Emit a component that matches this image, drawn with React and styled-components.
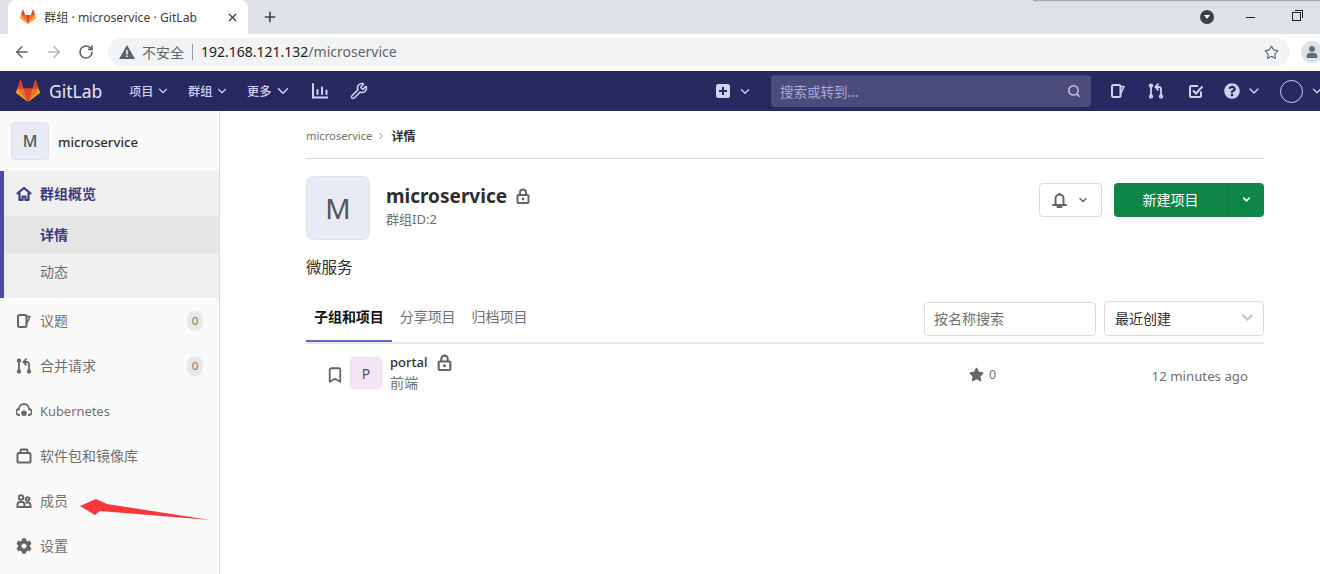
import React from 'react';
import styled, { createGlobalStyle } from 'styled-components';
import { ArrowLeft, ArrowRight, RotateCw, Star, X, Plus, ChevronDown, Search, Wrench, Bookmark } from 'lucide-react';
import { FaQuestionCircle, FaStar, FaCog, FaUser } from 'react-icons/fa';

const GlobalStyle = createGlobalStyle`
  html, body {
    margin: 0;
    padding: 0;
    height: 574px;
    overflow: hidden;
    background: #fff;
    font-family: "Noto Sans", "Noto Sans CJK SC", sans-serif;
    color: #2e2e2e;
  }
  * { box-sizing: border-box; }
`;

const Page = styled.div`
  position: relative;
  width: 1320px;
  height: 574px;
  overflow: hidden;
  display: flex;
  flex-direction: column;
`;

/* browser chrome */
const TabStrip = styled.div`
  height: 34px;
  background: #dee1e6;
  display: flex;
  align-items: center;
  padding-left: 8px;
  flex-shrink: 0;
`;

const Tab = styled.div`
  width: 240px;
  height: 34px;
  background: #fff;
  border-radius: 8px 8px 0 0;
  display: flex;
  align-items: center;
  padding: 0 9px 0 12px;
  font-size: 12.2px;
  color: #3c4043;
`;

const TabTitle = styled.span`
  margin-left: 8px;
  flex: 1;
  white-space: nowrap;
`;

const NewTab = styled.div`
  margin-left: 14px;
  display: flex;
  color: #3c4043;
`;

const WindowControls = styled.div`
  margin-left: auto;
  display: flex;
  align-items: center;
  padding-right: 19px;
`;

const ProfileDot = styled.div`
  width: 14px;
  height: 14px;
  border-radius: 50%;
  background: #3c4043;
  display: flex;
  align-items: center;
  justify-content: center;
  margin-right: 32px;
  &::after {
    content: '';
    border-left: 3px solid transparent;
    border-right: 3px solid transparent;
    border-top: 4px solid #fff;
  }
`;

const MinBar = styled.div`
  width: 9px;
  height: 1px;
  background: #222;
  margin-right: 37px;
`;

const RestoreBox = styled.div`
  position: relative;
  width: 9px;
  height: 9px;
  border: 1px solid #222;
  margin-top: -1px;
  &::after {
    content: '';
    position: absolute;
    top: -3px;
    right: -3px;
    width: 7px;
    height: 7px;
    border-top: 1px solid #222;
    border-right: 1px solid #222;
  }
`;

const TopShadow = styled.div`
  position: absolute;
  top: 0;
  left: 1033px;
  right: 0;
  height: 2px;
  background: linear-gradient(#9a9da1, #dee1e6);
`;

const Toolbar = styled.div`
  height: 37px;
  display: flex;
  align-items: flex-start;
  padding-top: 4px;
  flex-shrink: 0;
  background: #fff;
`;

const ToolButton = styled.div`
  width: 32px;
  height: 28px;
  display: flex;
  align-items: center;
  justify-content: center;
  flex-shrink: 0;
  color: ${p => p.$dim ? '#b4b6b9' : '#5f6368'};
  margin-left: ${p => p.$first ? 6 : 0}px;
`;

const Omnibox = styled.div`
  margin-left: 6px;
  width: 1182px;
  flex-shrink: 0;
  height: 28px;
  border-radius: 14px;
  background: #f1f3f4;
  display: flex;
  align-items: center;
  padding: 0 11px;
  font-size: 14px;
`;

const NotSecure = styled.span`
  margin-left: 7px;
  color: #5f6368;
  font-size: 14px;
  padding-bottom: 1px;
`;

const Sep = styled.span`
  width: 1px;
  height: 16px;
  background: #9aa0a6;
  margin: 0 8px;
`;

const Host = styled.span`
  color: #202124;
  font-size: 14px;
  padding-bottom: 2px;
`;

const UrlPath = styled.span`
  color: #5f6368;
  font-size: 14px;
  padding-bottom: 2px;
`;

const Bookmarked = styled.div`
  margin-left: auto;
  display: flex;
  color: #5f6368;
`;

const ProfileButton = styled.div`
  width: 22px;
  height: 22px;
  border-radius: 50%;
  background: #dee1e6;
  margin: 3px 0 0 11px;
  flex-shrink: 0;
  display: flex;
  align-items: center;
  justify-content: center;
  color: #5f6a7a;
`;

/* gitlab navbar */
const Navbar = styled.header`
  height: 40px;
  flex-shrink: 0;
  background: #292961;
  display: flex;
  align-items: center;
  padding-left: 16px;
  color: #d1d1f0;
`;

const BrandText = styled.span`
  margin-left: 9px;
  font-size: 17.5px;
  color: #e4e4f6;
  width: 80px;
`;

const NavMenu = styled.div`
  display: flex;
  align-items: center;
  width: ${p => p.$w}px;
  font-size: 12.2px;
  font-weight: 500;
  color: #d1d1f0;
  gap: 3px;
`;

const NavIcon = styled.div`
  display: flex;
  align-items: center;
  width: ${p => p.$w}px;
  color: #d1d1f0;
`;

const NavSpacer = styled.div`
  flex: 1;
`;

const SearchBox = styled.div`
  width: 320px;
  height: 32px;
  border-radius: 4px;
  background: #4b4b7c;
  display: flex;
  align-items: center;
  justify-content: space-between;
  padding: 0 10px 0 9px;
  font-size: 13.5px;
  color: #a9a9d6;
  margin: 0 19px 0 19px;
`;

const NavAvatar = styled.div`
  width: 23px;
  height: 23px;
  border-radius: 50%;
  border: 1px solid #d1d1f0;
  flex-shrink: 0;
  margin-right: 7px;
`;

const NavCaret = styled.div`
  display: flex;
  flex-shrink: 0;
  margin-right: -4px;
`;

/* layout */
const Body = styled.div`
  flex: 1;
  display: flex;
  min-height: 0;
`;

const Sidebar = styled.aside`
  width: 220px;
  flex-shrink: 0;
  background: #fafafa;
  border-right: 1px solid #dbdbdb;
`;

const ContextHeader = styled.div`
  height: 60px;
  display: flex;
  align-items: center;
  padding-left: 11px;
  font-size: 13.2px;
  font-weight: 500;
  color: #2e2e2e;
`;

const Avatar = styled.div`
  width: ${p => p.$size}px;
  height: ${p => p.$size}px;
  flex-shrink: 0;
  border-radius: ${p => p.$radius || 4}px;
  border: 1px solid rgba(0,0,0,0.03);
  background: ${p => p.$bg || '#e8eaf6'};
  color: #555;
  display: flex;
  align-items: center;
  justify-content: center;
  font-size: ${p => p.$font}px;
`;

const ContextName = styled.span`
  margin-left: 9px;
  padding-top: 2px;
`;

const ActiveGroup = styled.div`
  background: #f0f0f0;
  border-left: 4px solid #4b4ba3;
  height: 127px;
`;

const ActiveTitle = styled.div`
  height: 45px;
  display: flex;
  align-items: center;
  padding-left: 12px;
  gap: 8px;
  font-size: 14px;
  font-weight: 700;
  color: #3a3a80;
`;

const ActiveLabel = styled.span`
  padding-bottom: 2px;
`;

const SubItem = styled.div`
  height: 37px;
  padding: 0 0 2px 36px;
  display: flex;
  align-items: center;
  font-size: 14px;
  font-weight: ${p => p.$active ? 700 : 400};
  color: ${p => p.$active ? '#3a3a80' : '#707070'};
  background: ${p => p.$active ? '#e5e5e5' : 'transparent'};
`;

const NavItem = styled.div`
  height: 45px;
  display: flex;
  align-items: center;
  padding: 0 16px 0 16px;
  gap: 8px;
  font-size: 14px;
  color: #707070;
`;

const ItemIcon = styled.div`
  width: 16px;
  display: flex;
  justify-content: center;
  color: #666;
  flex-shrink: 0;
`;

const ItemLabel = styled.span`
  flex: 1;
  font-size: ${p => p.$latin ? 12.9 : 14}px;
  padding-top: ${p => p.$latin ? 1 : 0}px;
  padding-bottom: ${p => p.$latin ? 0 : 2}px;
`;

const Count = styled.span`
  width: 16px;
  height: 20px;
  border-radius: 8px;
  background: #e8e8e8;
  color: #777;
  font-size: 11.5px;
  display: flex;
  align-items: center;
  justify-content: center;
`;

const Main = styled.main`
  flex: 1;
  padding: 0 56px 0 86px;
`;

const Breadcrumbs = styled.div`
  height: 48px;
  padding-top: 2px;
  display: flex;
  align-items: center;
  border-bottom: 1px solid #dbdbdb;
  font-size: 11.2px;
  color: #707070;
`;

const CrumbSep = styled.span`
  display: flex;
  margin: 0 6px 0 5px;
  color: #909090;
`;

const CrumbCurrent = styled.span`
  font-size: 12px;
  font-weight: 700;
  color: #2e2e2e;
`;

const GroupHeader = styled.div`
  display: flex;
  align-items: flex-start;
  margin-top: 17px;
`;

const GroupInfo = styled.div`
  margin-left: 16px;
  padding-top: 5px;
`;

const GroupName = styled.div`
  display: flex;
  align-items: center;
  font-size: 19px;
  font-weight: 700;
  line-height: 30px;
  color: #2e2e2e;
  gap: 8px;
`;

const GroupId = styled.div`
  font-size: 13px;
  line-height: 16px;
  color: #707070;
`;

const GroupActions = styled.div`
  margin-left: auto;
  padding-top: 7px;
  display: flex;
  gap: 12px;
`;

const BellButton = styled.div`
  width: 63px;
  height: 34px;
  border: 1px solid #dbdbdb;
  border-radius: 4px;
  display: flex;
  align-items: center;
  justify-content: center;
  gap: 10px;
  color: #666;
`;

const SplitButton = styled.div`
  width: 150px;
  height: 34px;
  background: #108548;
  border-radius: 4px;
  display: flex;
  color: #fff;
  font-size: 14px;
`;

const SplitLabel = styled.div`
  width: 114px;
  padding-bottom: 2px;
  display: flex;
  align-items: center;
  justify-content: center;
  border-right: 1px solid #0d7a40;
`;

const SplitCaret = styled.div`
  flex: 1;
  padding-bottom: 2px;
  display: flex;
  align-items: center;
  justify-content: center;
`;

const Description = styled.p`
  margin: 17px 0 0;
  font-size: 15.5px;
  line-height: 20px;
  color: #2e2e2e;
`;

const TabsRow = styled.div`
  margin-top: 19px;
  height: 48px;
  display: flex;
  align-items: flex-start;
  border-bottom: 2px solid #e5e5e5;
`;

const TabList = styled.div`
  display: flex;
  height: 46px;
`;

const TabLink = styled.div`
  height: 46px;
  padding: 12px 8px 0;
  font-size: 14px;
  line-height: 18px;
  letter-spacing: -0.05px;
  font-weight: ${p => p.$active ? 700 : 400};
  color: ${p => p.$active ? '#111' : '#707070'};
  border-bottom: 2px solid ${p => p.$active ? '#6666c4' : 'transparent'};
`;

const Filters = styled.div`
  margin-left: auto;
  padding-top: 5px;
  display: flex;
  gap: 8px;
`;

const FilterInput = styled.div`
  width: 172px;
  height: 34px;
  margin-top: 1px;
  border: 1px solid #dbdbdb;
  border-radius: 4px;
  display: flex;
  align-items: center;
  padding: 0 0 2px 9px;
  font-size: 14px;
  color: #707070;
`;

const SortSelect = styled.div`
  width: 160px;
  height: 35px;
  border: 1px solid #dbdbdb;
  border-radius: 4px;
  display: flex;
  align-items: center;
  justify-content: space-between;
  padding: 0 7px 2px 10px;
  font-size: 14px;
  color: #2e2e2e;
`;

const ProjectRow = styled.div`
  display: flex;
  align-items: flex-start;
  padding: 13px 16px 0 20px;
`;

const BookmarkIcon = styled.div`
  display: flex;
  color: #666;
  margin: 9px 6px 0 0;
`;

const ProjectInfo = styled.div`
  margin-left: 8px;
  width: 579px;
  margin-top: -3px;
`;

const ProjectName = styled.div`
  display: flex;
  align-items: center;
  gap: 9px;
  font-size: 13px;
  line-height: 17px;
  font-weight: 500;
  color: #2e2e2e;
`;

const ProjectDesc = styled.div`
  font-size: 14px;
  line-height: 20px;
  margin-top: 2px;
  color: #707070;
`;

const Stars = styled.div`
  display: flex;
  align-items: center;
  gap: 5px;
  font-size: 12.5px;
  color: #707070;
  margin-top: 9px;
`;

const Updated = styled.div`
  margin-left: auto;
  font-size: 13.25px;
  color: #707070;
  margin-top: 10px;
`;

const Annotation = styled.svg`
  position: absolute;
  left: 70px;
  top: 490px;
`;

const GitlabLogo = ({ size }) => (
  <svg width={size} height={size} viewBox="0 0 36 36" style={{ flexShrink: 0 }}>
    <path fill="#e24329" d="M18 34.5 24.6 13.7H11.4z" />
    <path fill="#fc6d26" d="M18 34.5 11.4 13.7H2.1z" />
    <path fill="#fca326" d="M2.1 13.7.1 19.9a1.4 1.4 0 0 0 .5 1.5L18 34.5z" />
    <path fill="#e24329" d="M2.1 13.7h9.3L7.4 1.4a.7.7 0 0 0-1.3 0z" />
    <path fill="#fc6d26" d="M18 34.5 24.6 13.7h9.3z" />
    <path fill="#fca326" d="M33.9 13.7l2 6.2a1.4 1.4 0 0 1-.5 1.5L18 34.5z" />
    <path fill="#e24329" d="M33.9 13.7h-9.3l4-12.3a.7.7 0 0 1 1.3 0z" />
  </svg>
);

const Warning = () => (
  <svg width="16" height="14" viewBox="0 0 16 14">
    <path fill="#5f6368" d="M8 0 16 14H0z" />
    <path fill="#f1f3f4" d="M7.2 5h1.6v4.5H7.2zM7.2 10.5h1.6V12H7.2z" />
  </svg>
);

const IssuesIcon = ({ size = 16 }) => (
  <svg width={size} height={size} viewBox="0 0 16 16" fill="none" stroke="currentColor" strokeWidth="2" strokeLinejoin="round">
    <rect x="2" y="2" width="8.5" height="12" rx="1.5" />
    <path d="M11 3.5h3L11 10" strokeWidth="1.6" />
  </svg>
);

const MergeIcon = ({ size = 16 }) => (
  <svg width={size} height={size} viewBox="0 0 16 16" fill="none" stroke="currentColor" strokeWidth="1.8" strokeLinecap="round">
    <path d="M3 3.5v9" />
    <circle cx="3" cy="2.6" r="1.3" />
    <circle cx="3" cy="13.4" r="1.3" />
    <circle cx="13" cy="13.4" r="1.3" />
    <path d="M13 12V6a2 2 0 0 0-2-2H8.5" />
    <path d="M10 1.2 7.5 4 10 6.8" />
  </svg>
);

const TodoIcon = () => (
  <svg width="16" height="16" viewBox="0 0 16 16" fill="none" stroke="currentColor" strokeWidth="2">
    <path d="M13 8.5V13a1 1 0 0 1-1 1H3a1 1 0 0 1-1-1V4a1 1 0 0 1 1-1h7" />
    <path d="M5 7.5 8 10.5 14.5 3.5" />
  </svg>
);

const PlusSquare = () => (
  <svg width="14" height="14" viewBox="0 0 14 14">
    <rect width="14" height="14" rx="2.5" fill="currentColor" />
    <path d="M6 3h2v3h3v2H8v3H6V8H3V6h3z" fill="#292961" />
  </svg>
);

const ChartIcon = () => (
  <svg width="16" height="16" viewBox="0 0 16 16" fill="none" stroke="currentColor" strokeWidth="2" strokeLinecap="round">
    <path d="M1 1v13.5h14.5" />
    <path d="M5.5 7v4M10 4.5V11M14.5 7.5V11" />
  </svg>
);

const HomeIcon = () => (
  <svg width="16" height="16" viewBox="0 0 16 16" fill="none" stroke="currentColor" strokeWidth="2.2" strokeLinejoin="round">
    <path d="M.8 8 8 2l7.2 6" />
    <path d="M3.5 6.5V14h3v-3.5h3V14h3V6.5" />
  </svg>
);

const KubeIcon = () => (
  <svg width="16" height="16" viewBox="0 0 16 16" fill="none">
    <path d="M4 12H3.5A3 3 0 0 1 3 6a5 5 0 0 1 10 0 3 3 0 0 1-.5 6H12" stroke="currentColor" strokeWidth="1.8" />
    <path d="M8 7l3 2.3-1 3.5H6L5 9.3z" fill="currentColor" />
  </svg>
);

const PackageIcon = () => (
  <svg width="16" height="16" viewBox="0 0 16 16" fill="none" stroke="currentColor" strokeWidth="2" strokeLinejoin="round">
    <rect x="1.5" y="5" width="13" height="9.5" rx="1.5" />
    <path d="M4 5l1-3.5h6L12 5" />
  </svg>
);

const MembersIcon = () => (
  <svg width="16" height="16" viewBox="0 0 16 16" fill="none" stroke="currentColor" strokeWidth="2">
    <circle cx="5" cy="4.5" r="2.2" />
    <circle cx="11.5" cy="6" r="1.8" />
    <path d="M1.5 14v-2.4A2.6 2.6 0 0 1 4.1 9h1.8a2.6 2.6 0 0 1 2.6 2.6V14z" />
    <path d="M8.5 14h6v-2a2.6 2.6 0 0 0-4.6-1.6" />
  </svg>
);

const BellIcon = () => (
  <svg width="15" height="16" viewBox="0 0 15 16" fill="none" stroke="currentColor" strokeWidth="2" strokeLinejoin="round">
    <path d="M3.5 12.5V6.5a4 4 0 0 1 8 0v6" />
    <path d="M1 13h13" strokeLinecap="round" />
    <path d="M5.5 15h4" strokeLinecap="round" />
    <path d="M7.5 1v1.5" />
  </svg>
);

const LockIcon = ({ size = 16 }) => (
  <svg width={size} height={size} viewBox="0 0 16 16" fill="none">
    <rect x="2.5" y="7" width="11" height="8" rx="1" stroke="#666" strokeWidth="2" />
    <path d="M5 7V4.5a3 3 0 0 1 6 0V7" stroke="#666" strokeWidth="2" />
    <circle cx="8" cy="11" r="1.4" fill="#666" />
  </svg>
);

const ChevronRightMark = () => (
  <svg width="8" height="8" viewBox="0 0 8 8" fill="none" stroke="currentColor" strokeWidth="1">
    <path d="M2.5 1 5.5 4 2.5 7" />
  </svg>
);

const sideItems = [
  { label: '议题', icon: <IssuesIcon />, count: 0 },
  { label: '合并请求', icon: <MergeIcon />, count: 0 },
  { label: 'Kubernetes', icon: <KubeIcon />, latin: true },
  { label: '软件包和镜像库', icon: <PackageIcon /> },
  { label: '成员', icon: <MembersIcon /> },
  { label: '设置', icon: <FaCog size={16} /> },
];

const App = () => (
  <Page>
    <GlobalStyle />
    <TabStrip>
      <Tab>
        <GitlabLogo size={16} />
        <TabTitle>群组 · microservice · GitLab</TabTitle>
        <X size={13} strokeWidth={2.4} />
      </Tab>
      <NewTab><Plus size={16} strokeWidth={2.4} /></NewTab>
      <WindowControls>
        <ProfileDot />
        <MinBar />
        <RestoreBox />
      </WindowControls>
    </TabStrip>
    <TopShadow />
    <Toolbar>
      <ToolButton $first><ArrowLeft size={18} /></ToolButton>
      <ToolButton $dim><ArrowRight size={18} /></ToolButton>
      <ToolButton><RotateCw size={16} strokeWidth={2.4} /></ToolButton>
      <Omnibox>
        <Warning />
        <NotSecure>不安全</NotSecure>
        <Sep />
        <Host>192.168.121.132</Host>
        <UrlPath>/microservice</UrlPath>
        <Bookmarked><Star size={15} strokeWidth={1.8} /></Bookmarked>
      </Omnibox>
      <ProfileButton><FaUser size={12} /></ProfileButton>
    </Toolbar>
    <Navbar>
      <GitlabLogo size={24} />
      <BrandText>GitLab</BrandText>
      <NavMenu $w={59}>项目 <ChevronDown size={14} /></NavMenu>
      <NavMenu $w={59}>群组 <ChevronDown size={14} /></NavMenu>
      <NavMenu $w={65}>更多 <ChevronDown size={18} /></NavMenu>
      <NavIcon $w={38}><ChartIcon /></NavIcon>
      <NavIcon $w={20}><Wrench size={18} strokeWidth={2} /></NavIcon>
      <NavSpacer />
      <NavIcon $w={22}><PlusSquare /></NavIcon>
      <NavIcon $w={14}><ChevronDown size={17} strokeWidth={2.2} /></NavIcon>
      <SearchBox>
        搜索或转到...
        <Search size={14} strokeWidth={2.6} color="#c4c4d8" />
      </SearchBox>
      <NavIcon $w={38}><IssuesIcon /></NavIcon>
      <NavIcon $w={40}><MergeIcon /></NavIcon>
      <NavIcon $w={36}><TodoIcon /></NavIcon>
      <NavIcon $w={22}><FaQuestionCircle size={16} /></NavIcon>
      <NavIcon $w={34}><ChevronDown size={16} strokeWidth={2.2} /></NavIcon>
      <NavAvatar />
      <NavCaret><ChevronDown size={14} strokeWidth={2.2} /></NavCaret>
    </Navbar>
    <Body>
      <Sidebar>
        <ContextHeader>
          <Avatar $size={38} $font={16}>M</Avatar>
          <ContextName>microservice</ContextName>
        </ContextHeader>
        <ActiveGroup>
          <ActiveTitle><HomeIcon /><ActiveLabel>群组概览</ActiveLabel></ActiveTitle>
          <SubItem $active>详情</SubItem>
          <SubItem>动态</SubItem>
        </ActiveGroup>
        {sideItems.map(item => (
          <NavItem key={item.label}>
            <ItemIcon>{item.icon}</ItemIcon>
            <ItemLabel $latin={item.latin}>{item.label}</ItemLabel>
            {item.count !== undefined && <Count>{item.count}</Count>}
          </NavItem>
        ))}
      </Sidebar>
      <Main>
        <Breadcrumbs>
          microservice
          <CrumbSep><ChevronRightMark /></CrumbSep>
          <CrumbCurrent>详情</CrumbCurrent>
        </Breadcrumbs>
        <GroupHeader>
          <Avatar $size={64} $font={28} $radius={8}>M</Avatar>
          <GroupInfo>
            <GroupName>microservice <LockIcon /></GroupName>
            <GroupId>群组ID:2</GroupId>
          </GroupInfo>
          <GroupActions>
            <BellButton>
              <BellIcon />
              <ChevronDown size={12} strokeWidth={2.8} />
            </BellButton>
            <SplitButton>
              <SplitLabel>新建项目</SplitLabel>
              <SplitCaret><ChevronDown size={11} strokeWidth={3.4} /></SplitCaret>
            </SplitButton>
          </GroupActions>
        </GroupHeader>
        <Description>微服务</Description>
        <TabsRow>
          <TabList>
            <TabLink $active>子组和项目</TabLink>
            <TabLink>分享项目</TabLink>
            <TabLink>归档项目</TabLink>
          </TabList>
          <Filters>
            <FilterInput>按名称搜索</FilterInput>
            <SortSelect>
              最近创建
              <ChevronDown size={17} strokeWidth={3} color="#c4c4c4" />
            </SortSelect>
          </Filters>
        </TabsRow>
        <ProjectRow>
          <BookmarkIcon><Bookmark size={18} strokeWidth={2.4} /></BookmarkIcon>
          <Avatar $size={32} $font={14} $radius={5} $bg="#f3e5f5">P</Avatar>
          <ProjectInfo>
            <ProjectName>portal <LockIcon size={17} /></ProjectName>
            <ProjectDesc>前端</ProjectDesc>
          </ProjectInfo>
          <Stars><FaStar size={15} color="#666" /> 0</Stars>
          <Updated>12 minutes ago</Updated>
        </ProjectRow>
      </Main>
    </Body>
    <Annotation width="150" height="40" viewBox="70 490 150 40">
      <path fill="#f9373a" d="M80 506 96 499 107 504 210 520 100 511 95 515z" />
    </Annotation>
  </Page>
);

export default App;
